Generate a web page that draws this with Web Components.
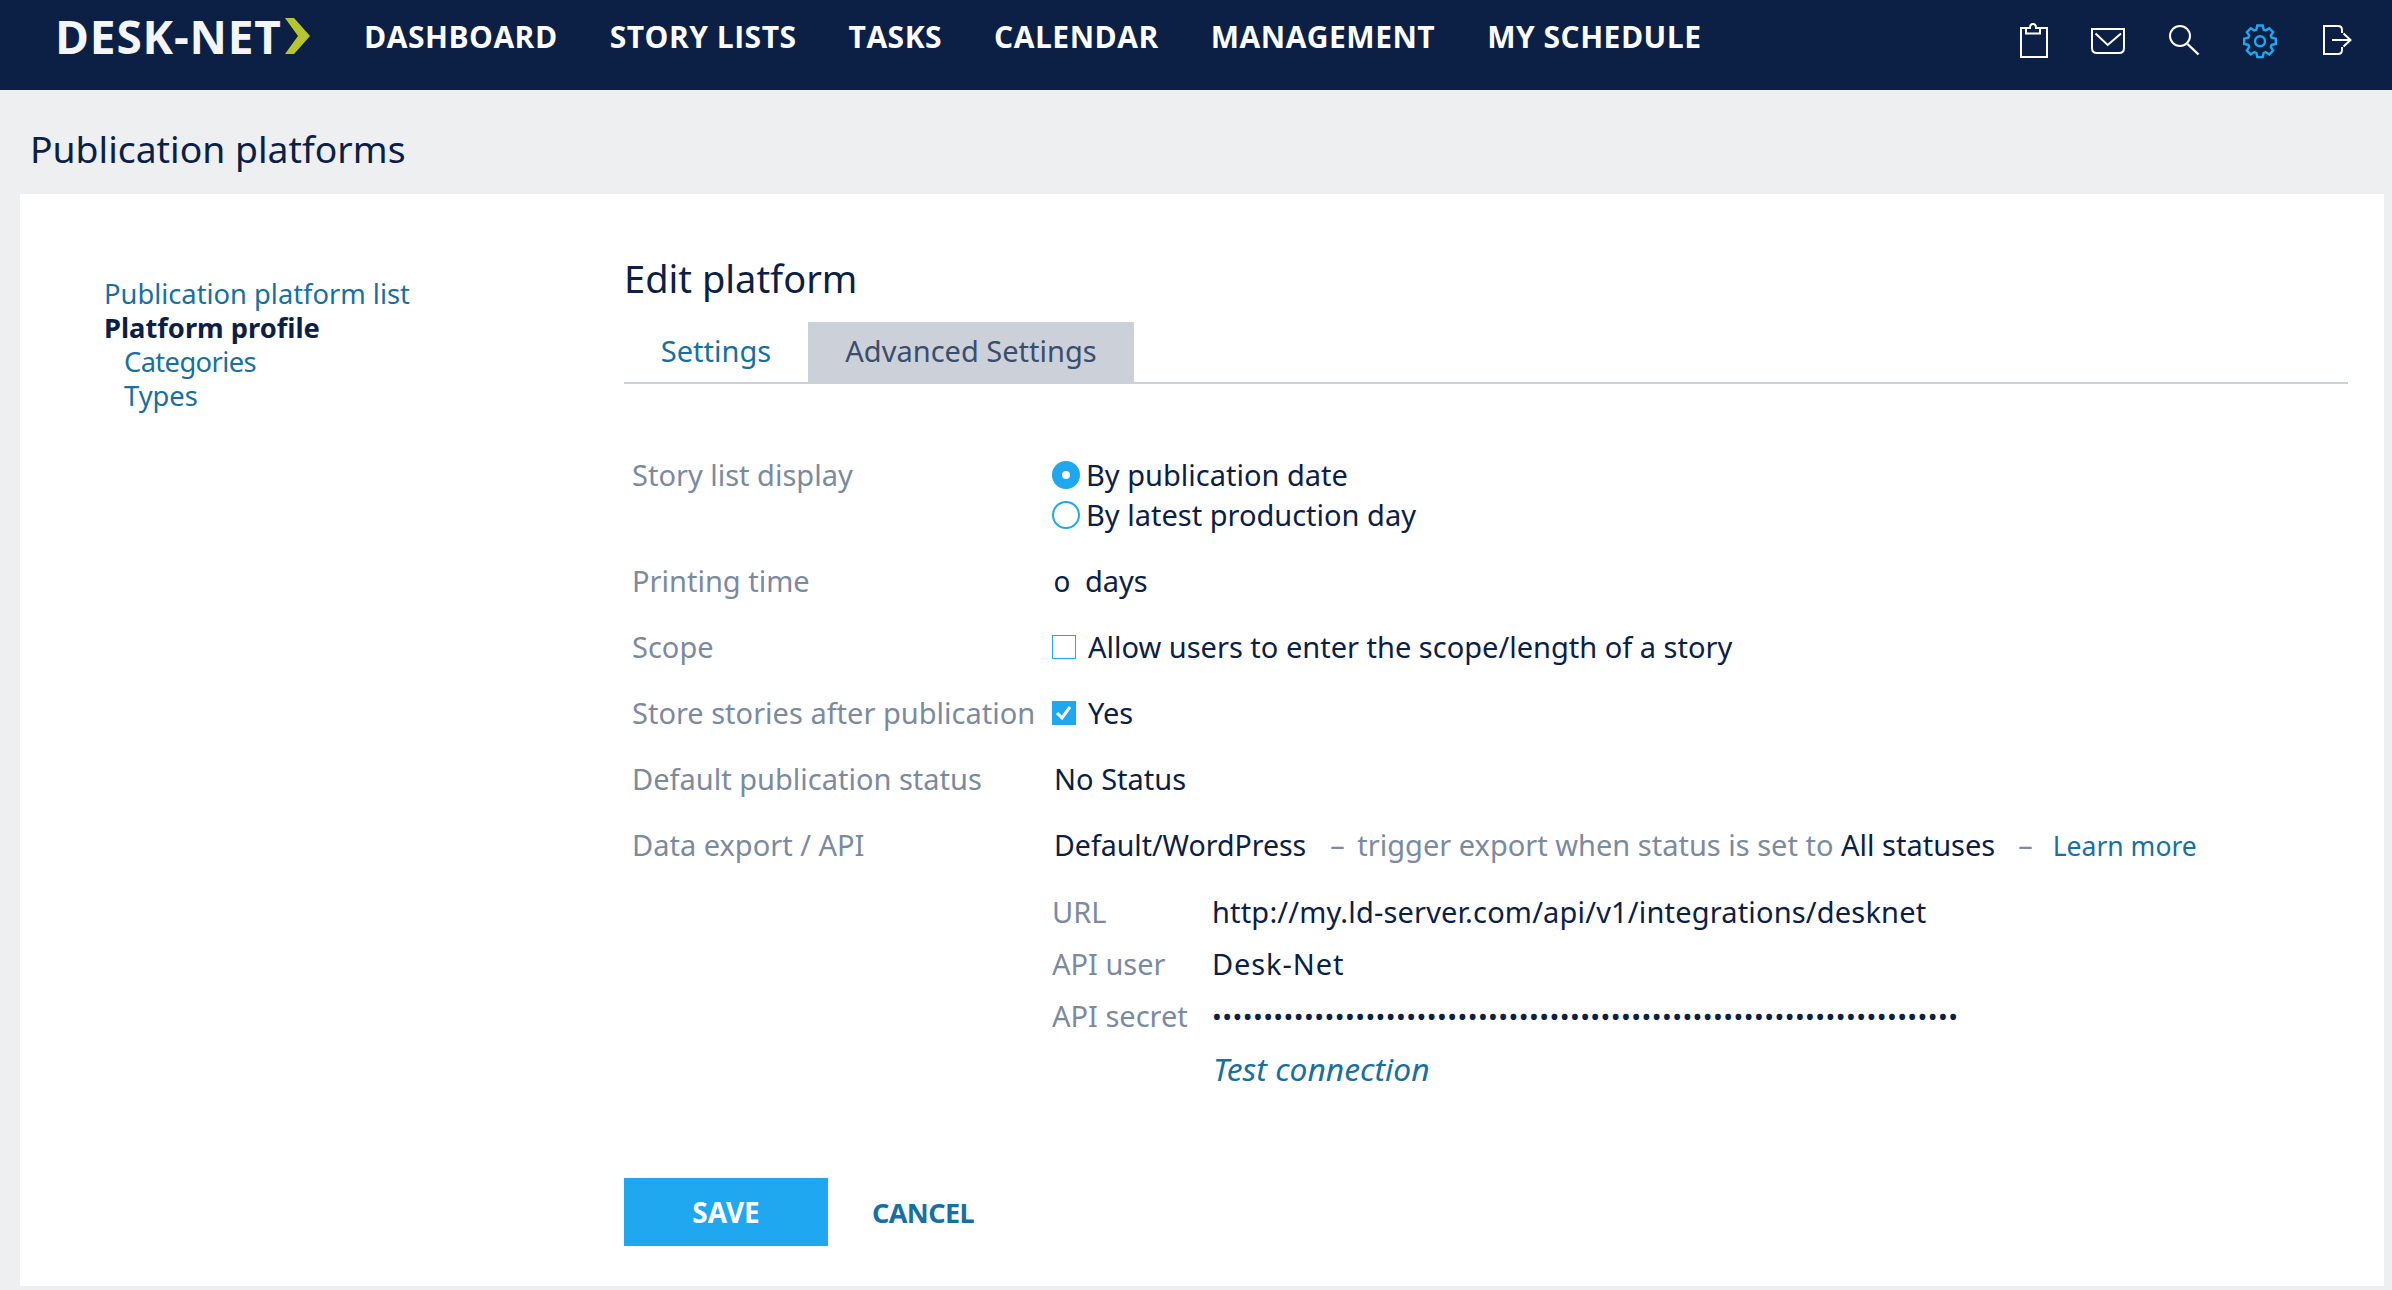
<!DOCTYPE html>
<html>
<head>
<meta charset="utf-8">
<style>
  html, body { margin: 0; height: 100%; background: #edeff1; }
  body { font-family: "Noto Sans", sans-serif; overflow: hidden; }
</style>
</head>
<body>
<dn-header></dn-header>
<dn-page title="Publication platforms">
  <dn-sidenav slot="side"></dn-sidenav>
  <dn-tabs></dn-tabs>
  <dn-form></dn-form>
  <dn-actions></dn-actions>
</dn-page>
<script>
function gearPath(cx, cy, ro, rv) {
  let d = '';
  for (let i = 0; i < 8; i++) {
    const a = i * Math.PI / 4 - Math.PI / 2;
    [[rv, -0.3], [ro, -0.17], [ro, 0.17], [rv, 0.3]].forEach(([r, o], j) => {
      const x = (cx + r * Math.cos(a + o)).toFixed(1);
      const y = (cy + r * Math.sin(a + o)).toFixed(1);
      d += (i === 0 && j === 0 ? 'M' : 'L') + x + ' ' + y;
    });
  }
  return d + 'Z';
}

class DnHeader extends HTMLElement {
  constructor() {
    super();
    this.attachShadow({ mode: 'open' });
  }
  connectedCallback() {
    const items = ['DASHBOARD', 'STORY LISTS', 'TASKS', 'CALENDAR', 'MANAGEMENT', 'MY SCHEDULE'];
    this.shadowRoot.innerHTML = `
      <style>
        :host { display: flex; height: 90px; background: #0b2044; color: #fff; padding-left: 55px; }
        .logo { display: flex; align-items: flex-start; font: 700 46px/72px "Open Sans", sans-serif; letter-spacing: 0.8px; width: 309px; flex: none; color: #f4f5f6; }
        .logo svg { margin: 18px 0 0 3px; }
        nav { display: flex; gap: 52px; font: 700 30px/74px "Open Sans", sans-serif; letter-spacing: 0.5px; }
        .icons { margin-left: auto; display: flex; padding-right: 16px; }
        .icons svg { width: 76px; height: 90px; fill: none; stroke: #fff; stroke-width: 2; }
      </style>
      <div class="logo">DESK-NET<svg width="25" height="36" viewBox="0 0 25 36"><path d="M0 0h9l16 18L9 36H0l13-18z" fill="#b6c62f"/></svg></div>
      <nav>${items.map(i => `<span>${i}</span>`).join('')}</nav>
      <div class="icons">
        <svg viewBox="0 0 76 90"><path d="M30 28H25V57H51V28H44M30 33.500V28H34Q34 24 37 24T40 28H44V33.500Z"/></svg>
        <svg viewBox="0 0 76 90"><path d="M20 29H52V48Q52 53 47 53H25Q20 53 20 48ZM23.500 33.500L35.700 45L49 33.500"/></svg>
        <svg viewBox="0 0 76 90"><circle cx="32" cy="36" r="10"/><path d="M39.500 44L50.500 54.500" stroke-width="2.400"/></svg>
        <svg viewBox="0 0 76 90" style="stroke:#1fa7f0;stroke-width:2.400"><circle cx="36" cy="41.300" r="5"/><path d="${gearPath(36, 41.3, 16, 12.2)}"/></svg>
        <svg viewBox="0 0 76 90"><path d="M42 33V30Q42 26 38 26H24V54H38Q42 54 42 50V47M32 40H50M43.500 33.500L50.500 40L43.500 46.500"/></svg>
      </div>`;
  }
}

class DnPage extends HTMLElement {
  constructor() {
    super();
    this.attachShadow({ mode: 'open' });
  }
  connectedCallback() {
    this.shadowRoot.innerHTML = `
      <style>
        :host { display: block; }
        h1 { margin: 0; height: 104px; box-sizing: border-box; padding: 36px 0 0 30px; font: 400 37.300px/46px "Noto Sans", sans-serif; color: #0b2044; }
        .card { display: flex; margin: 0 8px 0 20px; height: 1092px; background: #fff; }
        aside { width: 604px; flex: none; padding: 83px 0 0 84px; box-sizing: border-box; }
        main { flex: 1; padding: 58px 36px 0 0; }
        h2 { margin: 0 0 18px; font: 400 38px/52px "Noto Sans", sans-serif; color: #0b2044; }
      </style>
      <h1>${this.getAttribute('title')}</h1>
      <div class="card">
        <aside><slot name="side"></slot></aside>
        <main><h2>Edit platform</h2><slot></slot></main>
      </div>`;
  }
}

class DnSidenav extends HTMLElement {
  constructor() {
    super();
    this.attachShadow({ mode: 'open' });
  }
  connectedCallback() {
    this.shadowRoot.innerHTML = `
      <style>
        :host { display: block; font-size: 27.300px; line-height: 34px; color: #1670a1; }
        div { white-space: nowrap; }
        b { color: #0b2044; }
        .sub { padding-left: 20px; }
        .cat { letter-spacing: -0.6px; }
      </style>
      <div>Publication platform list</div>
      <div><b>Platform profile</b></div>
      <div class="sub cat">Categories</div>
      <div class="sub">Types</div>`;
  }
}

class DnTabs extends HTMLElement {
  constructor() {
    super();
    this.attachShadow({ mode: 'open' });
  }
  connectedCallback() {
    this.shadowRoot.innerHTML = `
      <style>
        :host { display: flex; height: 62px; box-sizing: border-box; border-bottom: 2px solid #ccd1d9; font-size: 29px; line-height: 58px; }
        span { display: block; height: 62px; text-align: center; box-sizing: border-box; }
        .one { width: 184px; color: #1670a1; }
        .two { width: 326px; background: #ccd1d9; color: #3a4d6c; }
      </style>
      <span class="one">Settings</span><span class="two">Advanced Settings</span>`;
  }
}

class DnForm extends HTMLElement {
  constructor() {
    super();
    this.attachShadow({ mode: 'open' });
  }
  connectedCallback() {
    const dots = '•'.repeat(73);
    this.shadowRoot.innerHTML = `
      <style>
        :host { display: block; font-size: 29px; line-height: 40px; color: #0b2044; padding: 71px 0 0 8px; }
        .row { display: grid; grid-template-columns: 420px 1fr; margin-bottom: 26px; white-space: nowrap; }
        .label { color: #7b8a9f; }
        .opt { display: flex; align-items: center; height: 40px; }
        .radio { width: 28px; height: 28px; border-radius: 50%; box-sizing: border-box; border: 2px solid #1fa7f0; margin-right: 6px; }
        .radio.on { border: 10px solid #1fa7f0; background: #fff; }
        .check { width: 24px; height: 24px; box-sizing: border-box; border: 1px solid #1fa7f0; margin-right: 12px; }
        .check.on { background: #1fa7f0; display: flex; align-items: center; justify-content: center; }
        .dim { color: #7b8a9f; }
        .val { padding-left: 2px; }
        .zero { font-feature-settings: "onum"; margin-right: 15px; }
        .dw { font-size: 28.500px; }
        .d1 { margin-left: 24px; }
        .dash { margin-right: 5px; }
        .d2 { margin-left: 23px; margin-right: 20px; }
        a { color: #1670a1; }
        .more { font-size: 26.500px; }
        .api { display: grid; grid-template-columns: 160px 1fr; row-gap: 12px; margin-top: 26px; }
        .url { letter-spacing: 0.17px; }
        .user { letter-spacing: 0.9px; }
        .test { font-size: 31.800px; font-style: italic; margin: 1px 0 0 1px; grid-column: 2; }
        .secret { font-size: 26px; letter-spacing: 0.45px; }
      </style>
      <div class="row"><div class="label">Story list display</div><div>
        <div class="opt"><span class="radio on"></span>By publication date</div>
        <div class="opt"><span class="radio"></span>By latest production day</div>
      </div></div>
      <div class="row"><div class="label">Printing time</div><div class="val"><span class="zero">0</span>days</div></div>
      <div class="row"><div class="label">Scope</div><div class="opt"><span class="check"></span>Allow users to enter the scope/length of a story</div></div>
      <div class="row"><div class="label">Store stories after publication</div><div class="opt"><span class="check on"><svg width="20" height="20" viewBox="0 0 20 20"><path d="M3 10l5 5 8-11" fill="none" stroke="#fff" stroke-width="3"/></svg></span>Yes</div></div>
      <div class="row"><div class="label">Default publication status</div><div class="val">No Status</div></div>
      <div class="row" style="margin-bottom:0"><div class="label">Data export / API</div><div>
        <div class="val"><span class="dw">Default/WordPress</span><span class="dim d1"><span class="dash">–</span> trigger export when status is set to</span> All statuses<span class="dim d2">–</span><a class="more">Learn more</a></div>
        <div class="api">
          <div class="dim">URL</div><div class="url">http://my.ld-server.com/api/v1/integrations/desknet</div>
          <div class="dim">API user</div><div class="user">Desk-Net</div>
          <div class="dim">API secret</div><div class="secret">${dots}</div>
          <a class="test">Test connection</a>
        </div>
      </div></div>`;
  }
}

class DnActions extends HTMLElement {
  constructor() {
    super();
    this.attachShadow({ mode: 'open' });
  }
  connectedCallback() {
    this.shadowRoot.innerHTML = `
      <style>
        :host { display: flex; align-items: center; margin-top: 89px; font-size: 28px; font-weight: 700; }
        .save { width: 204px; height: 68px; background: #1fa7f0; color: #fff; display: flex; align-items: center; justify-content: center; }
        .cancel { margin-left: 44px; color: #1670a1; font-size: 27px; letter-spacing: -0.6px; }
      </style>
      <div class="save">SAVE</div><div class="cancel">CANCEL</div>`;
  }
}

customElements.define('dn-header', DnHeader);
customElements.define('dn-page', DnPage);
customElements.define('dn-sidenav', DnSidenav);
customElements.define('dn-tabs', DnTabs);
customElements.define('dn-form', DnForm);
customElements.define('dn-actions', DnActions);
</script>
</body>
</html>
